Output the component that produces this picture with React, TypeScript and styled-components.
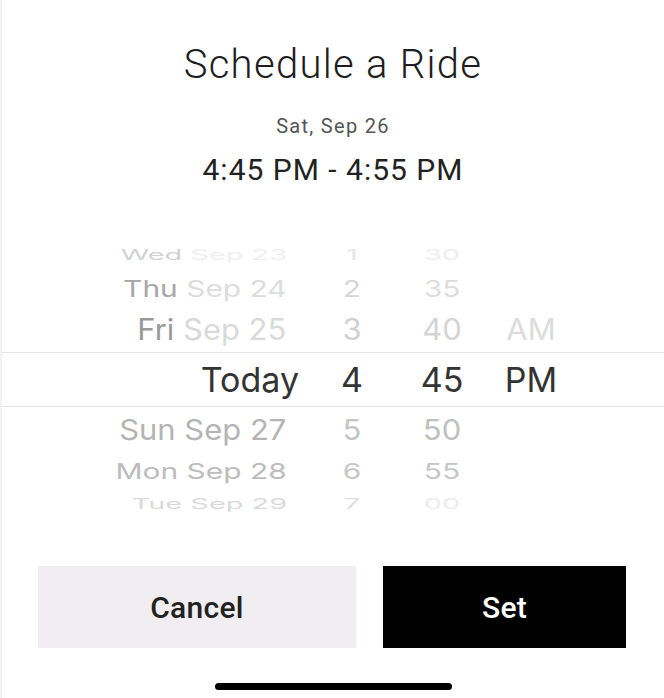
import React from 'react'
import styled, { createGlobalStyle } from 'styled-components'

const GlobalStyle = createGlobalStyle`
  html, body {
    margin: 0;
    padding: 0;
    background: #ffffff;
  }
  * {
    box-sizing: border-box;
  }
`

interface PickerRow {
  weekday: string
  date: string
  hour: string
  minute: string
  period: string
  height: number
  sx: number
  sy: number
  weekdayColor: string
  dateColor: string
  hourColor: string
  minuteColor: string
  periodColor: string
  selected?: boolean
}

const rows: PickerRow[] = [
  { weekday: 'Wed', date: 'Sep 23', hour: '1', minute: '30', period: '', height: 30, sx: 0.85, sy: 0.42, weekdayColor: '#d2d2d2', dateColor: '#efefef', hourColor: '#e6e6e6', minuteColor: '#eeeeee', periodColor: '#eeeeee' },
  { weekday: 'Thu', date: 'Sep 24', hour: '2', minute: '35', period: '', height: 37, sx: 0.88, sy: 0.66, weekdayColor: '#a6a6a6', dateColor: '#dcdcdc', hourColor: '#d6d6d6', minuteColor: '#dddddd', periodColor: '#dddddd' },
  { weekday: 'Fri', date: 'Sep 25', hour: '3', minute: '40', period: 'AM', height: 45, sx: 0.91, sy: 0.86, weekdayColor: '#999999', dateColor: '#d9d9d9', hourColor: '#d0d0d0', minuteColor: '#d4d4d4', periodColor: '#dcdcdc' },
  { weekday: '', date: 'Today', hour: '4', minute: '45', period: 'PM', height: 55, sx: 1, sy: 1, weekdayColor: '#333333', dateColor: '#333333', hourColor: '#333333', minuteColor: '#333333', periodColor: '#333333', selected: true },
  { weekday: 'Sun', date: 'Sep 27', hour: '5', minute: '50', period: '', height: 45, sx: 0.91, sy: 0.84, weekdayColor: '#b4b4b4', dateColor: '#b4b4b4', hourColor: '#c4c4c4', minuteColor: '#bfbfbf', periodColor: '#dddddd' },
  { weekday: 'Mon', date: 'Sep 28', hour: '6', minute: '55', period: '', height: 37, sx: 0.88, sy: 0.64, weekdayColor: '#bcbcbc', dateColor: '#bcbcbc', hourColor: '#c6c6c6', minuteColor: '#c6c6c6', periodColor: '#dddddd' },
  { weekday: 'Tue', date: 'Sep 29', hour: '7', minute: '00', period: '', height: 29, sx: 0.85, sy: 0.42, weekdayColor: '#dadada', dateColor: '#dadada', hourColor: '#dedede', minuteColor: '#ececec', periodColor: '#eeeeee' },
]

export default function App() {
  return (
    <>
      <GlobalStyle />
      <Screen>
        <Header>
          <Title>Schedule a Ride</Title>
          <DateLabel>Sat, Sep 26</DateLabel>
          <TimeRange>4:45 PM - 4:55 PM</TimeRange>
        </Header>

        <Picker>
          {rows.map((row, i) => {
            const squeeze = { transform: `scaleX(${row.sx})` }
            return (
              <Row key={i} $height={row.height} $selected={row.selected}>
                <Cells style={{ transform: `scaleY(${row.sy})` }}>
                  <DayCell $shift={row.selected ? 0 : 14} style={squeeze}>
                    {row.weekday && <Part style={{ color: row.weekdayColor }}>{row.weekday} </Part>}
                    <Part style={{ color: row.dateColor }}>{row.date}</Part>
                  </DayCell>
                  <Cell style={{ ...squeeze, color: row.hourColor }}>{row.hour}</Cell>
                  <Cell style={{ ...squeeze, color: row.minuteColor }}>{row.minute}</Cell>
                  <Cell style={{ ...squeeze, color: row.periodColor }}>{row.period}</Cell>
                </Cells>
              </Row>
            )
          })}
        </Picker>

        <Actions>
          <ActionButton $variant="secondary">Cancel</ActionButton>
          <ActionButton $variant="primary">Set</ActionButton>
        </Actions>

        <HomeBar />
      </Screen>
    </>
  )
}

const Screen = styled.div`
  width: 664px;
  height: 698px;
  background: #ffffff;
  display: flex;
  flex-direction: column;
  overflow: hidden;
  border-left: 2px solid #f2f2f2;
`

const Header = styled.div`
  display: flex;
  flex-direction: column;
  align-items: center;
  padding-top: 41px;
  font-family: Roboto, "Liberation Sans", sans-serif;
`

const Title = styled.h1`
  margin: 0;
  font-size: 40px;
  line-height: 48px;
  font-weight: 300;
  letter-spacing: 1.3px;
  color: #1e1e1e;
`

const DateLabel = styled.div`
  margin-top: 25px;
  font-size: 20px;
  line-height: 24px;
  letter-spacing: 1.3px;
  color: #555555;
`

const TimeRange = styled.div`
  margin-top: 14px;
  font-size: 30px;
  line-height: 36px;
  letter-spacing: 1px;
  color: #222222;
`

const Picker = styled.div`
  margin-top: 52px;
  display: flex;
  flex-direction: column;
  font-family: Inter, "Liberation Sans", sans-serif;
  font-size: 34px;
`

const Row = styled.div<{ $height: number; $selected?: boolean }>`
  height: ${p => p.$height}px;
  display: flex;
  align-items: center;
  border-top: ${p => (p.$selected ? '1px solid #e6e6e6' : 'none')};
  border-bottom: ${p => (p.$selected ? '1px solid #e6e6e6' : 'none')};
`

const Cells = styled.div`
  display: grid;
  grid-template-columns: 297px 106px 74px 104px;
  width: 100%;
  line-height: 1;
  white-space: nowrap;
`

const DayCell = styled.div<{ $shift: number }>`
  text-align: right;
  padding-right: ${p => p.$shift}px;
  transform-origin: right center;
`

const Part = styled.span``

const Cell = styled.div`
  text-align: center;
  transform-origin: center;
`

const Actions = styled.div`
  margin-top: 48px;
  display: flex;
  gap: 27px;
  padding-left: 36px;
`

const ActionButton = styled.button<{ $variant: 'primary' | 'secondary' }>`
  height: 82px;
  width: ${p => (p.$variant === 'primary' ? 243 : 318)}px;
  border: none;
  border-radius: 0;
  background: ${p => (p.$variant === 'primary' ? '#000000' : '#f1eef1')};
  color: ${p => (p.$variant === 'primary' ? '#ffffff' : '#222222')};
  font-family: Roboto, "Liberation Sans", sans-serif;
  font-size: 30px;
  font-weight: 500;
  letter-spacing: 0.3px;
  cursor: pointer;
`

const HomeBar = styled.div`
  margin: 35px auto 0;
  width: 237px;
  height: 7px;
  border-radius: 4px;
  background: #000000;
`
